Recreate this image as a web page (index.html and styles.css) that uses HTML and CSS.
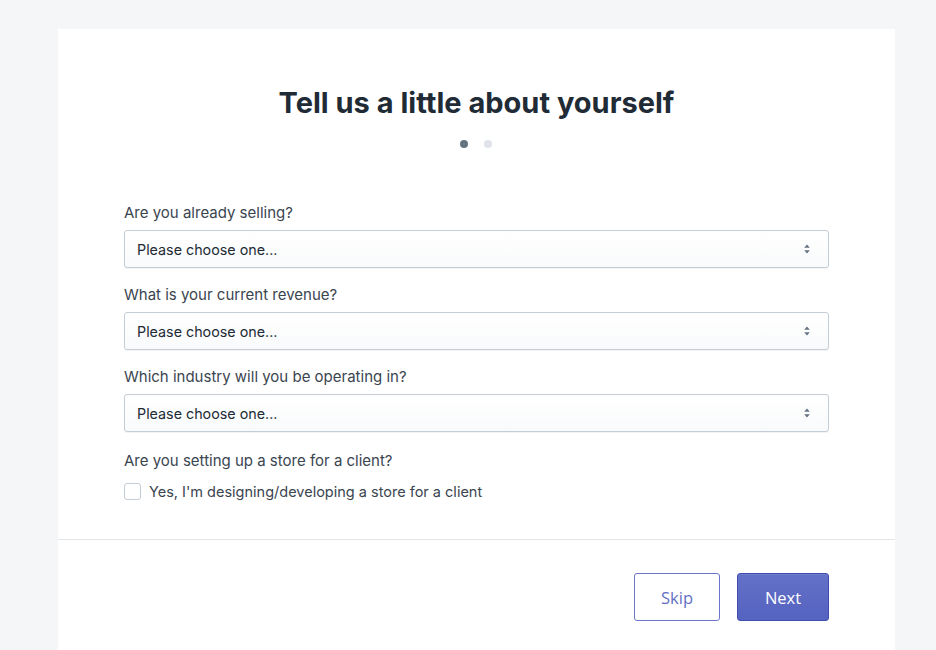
FILE: index.html
```html
<!DOCTYPE html>
<html>
<head>
<meta charset="utf-8">
<link rel="stylesheet" href="styles.css">
</head>
<body>
<div class="card">
  <div class="body">
    <h1 class="title">Tell us a little about yourself</h1>
    <div class="dots"><span class="dot active"></span><span class="dot"></span></div>
    <div class="form">
      <div class="field">
        <label class="label">Are you already selling?</label>
        <div class="select"><span>Please choose one...</span>
          <svg class="arrows" width="8" height="12" viewBox="0 0 8 12"><path d="M4 1.5 L6.8 4.8 H1.2 Z M4 10.5 L1.2 7.2 H6.8 Z" fill="#637381"/></svg>
        </div>
      </div>
      <div class="field">
        <label class="label">What is your current revenue?</label>
        <div class="select"><span>Please choose one...</span>
          <svg class="arrows" width="8" height="12" viewBox="0 0 8 12"><path d="M4 1.5 L6.8 4.8 H1.2 Z M4 10.5 L1.2 7.2 H6.8 Z" fill="#637381"/></svg>
        </div>
      </div>
      <div class="field">
        <label class="label">Which industry will you be operating in?</label>
        <div class="select"><span>Please choose one...</span>
          <svg class="arrows" width="8" height="12" viewBox="0 0 8 12"><path d="M4 1.5 L6.8 4.8 H1.2 Z M4 10.5 L1.2 7.2 H6.8 Z" fill="#637381"/></svg>
        </div>
      </div>
      <div class="field field-check">
        <label class="label">Are you setting up a store for a client?</label>
        <div class="check"><span class="box"></span><span>Yes, I'm designing/developing a store for a client</span></div>
      </div>
    </div>
  </div>
  <div class="footer">
    <button class="btn skip">Skip</button>
    <button class="btn next">Next</button>
  </div>
</div>
</body>
</html>
```
FILE: styles.css
```css
html, body { margin: 0; padding: 0; }
body {
  background: #f4f6f8;
  font-family: Inter, "Noto Sans", sans-serif;
  color: #212b36;
  height: 650px;
  overflow: hidden;
}
.card {
  margin: 29px 0 0 58px;
  width: 837px;
  background: #fff;
  min-height: 640px;
}
.body {
  padding: 56px 66px 39px;
  border-bottom: 1px solid #e3e6e9;
}
.title {
  margin: 0;
  text-align: center;
  font-size: 29px;
  line-height: 36px;
  font-weight: 700;
  letter-spacing: 0;
  color: #212b36;
}
.dots {
  display: flex;
  justify-content: center;
  gap: 16px;
  margin-top: 19px;
  padding-right: 2px;
}
.dot {
  width: 8px;
  height: 8px;
  border-radius: 50%;
  background: #dfe3e8;
}
.dot.active { background: #637381; }
.form {
  margin-top: 55px;
  display: flex;
  flex-direction: column;
  gap: 17px;
}
.field {
  display: flex;
  flex-direction: column;
  gap: 7px;
}
.field-check { margin-top: 2px; }
.label {
  font-size: 15px;
  line-height: 20px;
  color: #3a4550;
}
.select {
  height: 36px;
  border: 1px solid #c4cdd5;
  border-radius: 3px;
  background: linear-gradient(to bottom, #ffffff, #f9fafb);
  box-shadow: 0 1px 0 rgba(22,29,37,0.05);
  display: flex;
  align-items: center;
  justify-content: space-between;
  padding: 0 17px 0 12px;
  font-size: 14.3px;
  color: #212b36;
}
.check {
  display: flex;
  align-items: center;
  gap: 8px;
  font-size: 14.5px;
  color: #3a4550;
  margin-top: 5px;
}
.box {
  width: 15px;
  height: 15px;
  border: 1px solid #c4cdd5;
  border-radius: 3px;
  background: #fff;
}
.footer {
  display: flex;
  justify-content: flex-end;
  gap: 17px;
  padding: 33px 66px 0;
}
.btn {
  height: 48px;
  border-radius: 3px;
  font-family: "Open Sans", "Noto Sans", sans-serif;
  font-size: 16.5px;
  cursor: pointer;
}
.skip {
  width: 86px;
  background: #fff;
  border: 1px solid #6b76c9;
  color: #6470c4;
}
.next {
  width: 92px;
  background: linear-gradient(to bottom, #6371c7, #5563c1);
  border: 1px solid #3f4eae;
  color: #fff;
  box-shadow: inset 0 1px 0 0 #6f7bcb;
}
```
